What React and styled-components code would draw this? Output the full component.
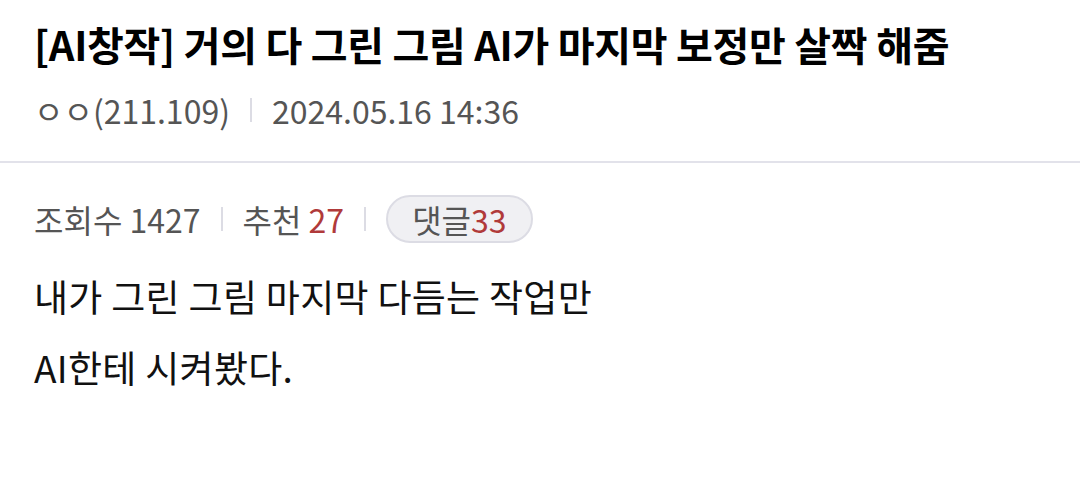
import React from "react";
import styled, { createGlobalStyle } from "styled-components";

const GlobalStyle = createGlobalStyle`
  html, body {
    margin: 0;
    padding: 0;
    background: #ffffff;
  }
  body {
    font-family: "Noto Sans CJK KR", "Noto Sans", sans-serif;
  }
`;

const App = () => {
  return (
    <>
      <GlobalStyle />
      <Page>
        <Header>
          <Title>[AI창작] 거의 다 그린 그림 AI가 마지막 보정만 살짝 해줌</Title>
          <MetaRow>
            <MetaText>ㅇㅇ(211.109)</MetaText>
            <Divider />
            <MetaText>2024.05.16 14:36</MetaText>
          </MetaRow>
        </Header>
        <Body>
          <StatsRow>
            <MetaText>조회수 1427</MetaText>
            <Divider />
            <MetaText>
              추천 <Count>27</Count>
            </MetaText>
            <Divider />
            <CommentPill>
              댓글<Count>33</Count>
            </CommentPill>
          </StatsRow>
          <Content>
            <Para>내가 그린 그림 마지막 다듬는 작업만</Para>
            <Para>AI한테 시켜봤다.</Para>
          </Content>
        </Body>
      </Page>
    </>
  );
};

export default App;

// Styled Components

const Page = styled.div`
  width: 1080px;
  height: 504px;
  overflow: hidden;
`;

const Header = styled.div`
  padding: 19px 34px 31px;
  border-bottom: 2px solid #e2e2ea;
`;

const Title = styled.h1`
  margin: 0;
  font-size: 40px;
  font-weight: 700;
  line-height: 50px;
  color: #000;
  letter-spacing: -0.3px;
  white-space: nowrap;
`;

const MetaRow = styled.div`
  display: flex;
  align-items: center;
  margin-top: 21px;
`;

const MetaText = styled.span`
  font-size: 32px;
  color: #555555;
  line-height: 40px;
`;

const Divider = styled.span`
  width: 2px;
  height: 24px;
  background: #dcdce4;
  margin: 0 20px;
`;

const Body = styled.div`
  padding: 32px 34px 0;
`;

const StatsRow = styled.div`
  display: flex;
  align-items: center;
`;

const Count = styled.span`
  color: #b03a3a;
`;

const CommentPill = styled.span`
  display: inline-flex;
  align-items: center;
  height: 48px;
  padding: 0 24px;
  border-radius: 24px;
  background: #f0f0f3;
  border: 2px solid #dcdce4;
  font-size: 32px;
  color: #555555;
  box-sizing: border-box;
`;

const Content = styled.div`
  margin-top: 18px;
`;

const Para = styled.p`
  margin: 0;
  font-size: 37px;
  line-height: 71px;
  color: #111;
  letter-spacing: 0.3px;
`;
